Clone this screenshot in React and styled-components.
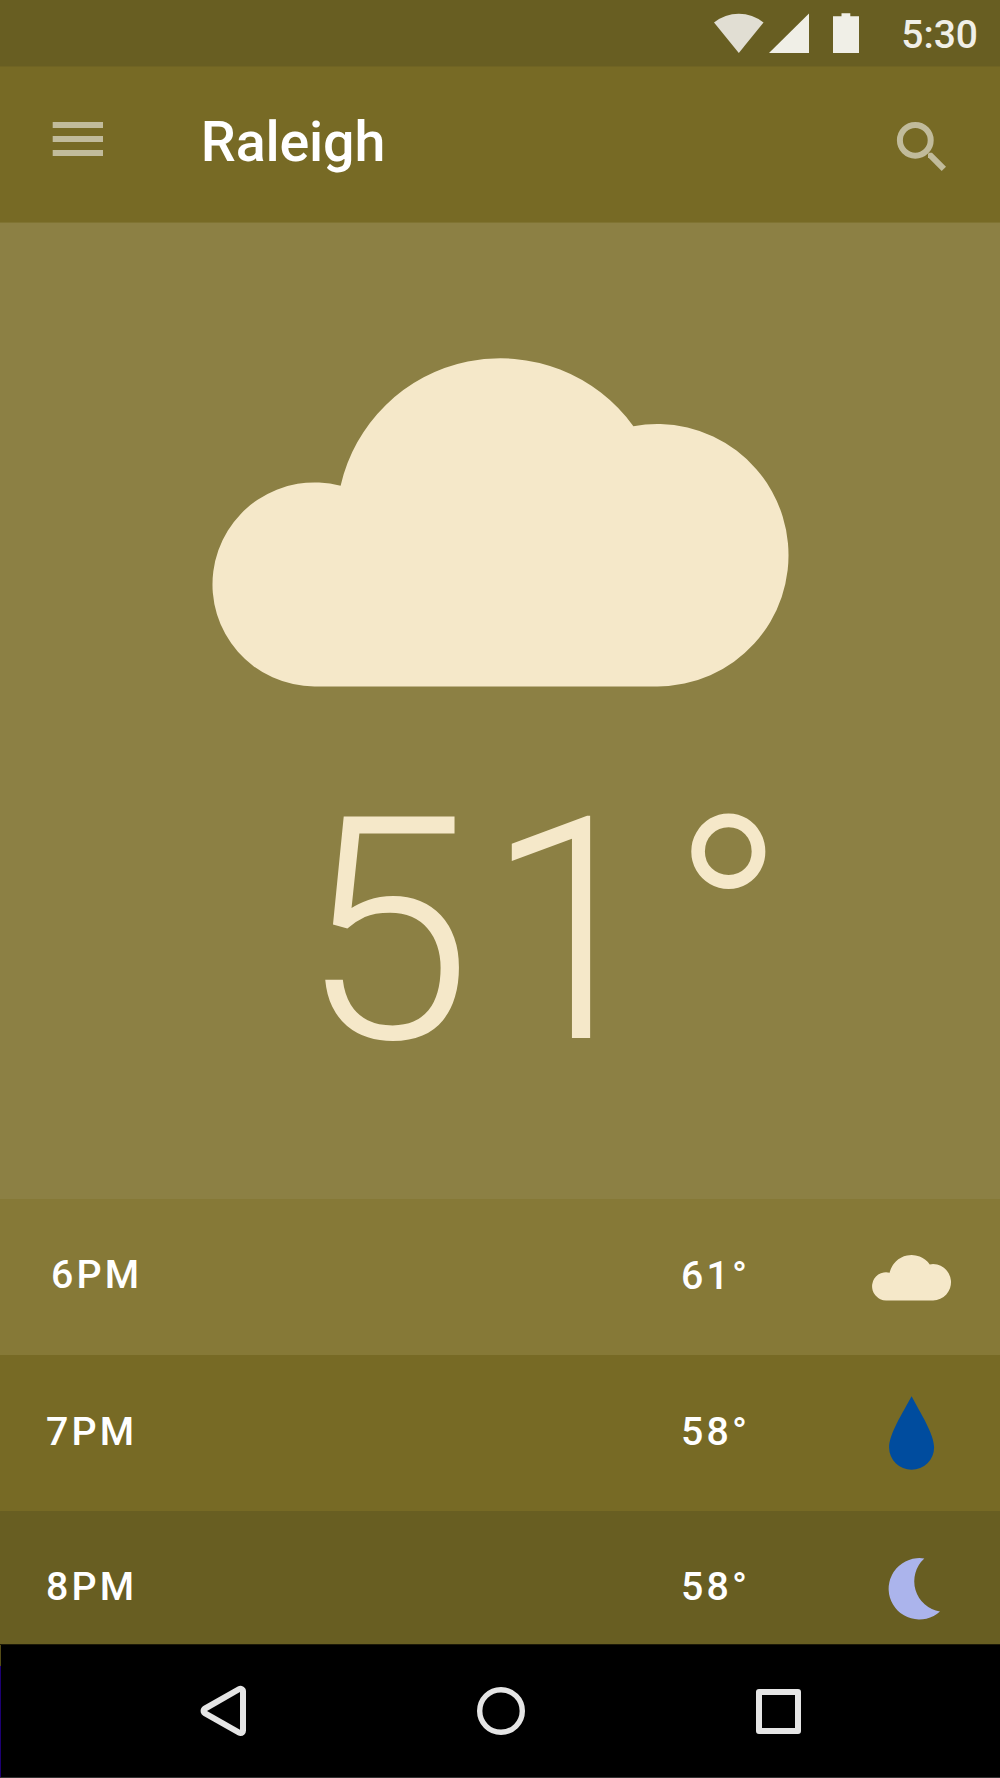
import React from "react";
import styled, { createGlobalStyle } from "styled-components";

const cream = "#f5e8c9";

const GlobalStyle = createGlobalStyle`
  *, *::before, *::after { box-sizing: border-box; }
  body { margin: 0; background: #685e22; }
  svg { display: block; flex: none; overflow: visible; }
`;

const Screen = styled.div`
  width: 1000px;
  height: 1778px;
  display: flex;
  flex-direction: column;
  overflow: hidden;
  font-family: Roboto, "Noto Sans", sans-serif;
  color: #fff;
`;

const StatusBar = styled.header`
  flex: 0 0 66px;
  display: flex;
  align-items: flex-start;
  justify-content: flex-end;
  padding-right: 22px;
  background: #685e22;
`;

const StatusIcons = styled.div`
  padding-top: 13px;
`;

const Clock = styled.time`
  margin-left: 41px;
  padding-top: 16px;
  font-size: 39px;
  line-height: 1;
  font-weight: 500;
  color: #f0efe7;
`;

const AppBar = styled.div`
  flex: 0 0 156px;
  display: flex;
  align-items: flex-start;
  padding: 0 53px;
  background: #776a25;
  border-top: 1px solid #706423;
`;

const IconButton = styled.button`
  appearance: none;
  border: 0;
  padding: 0;
  margin: ${(p) => p.$top}px 0 0;
  background: none;
  color: #c1bb9b;
`;

const Title = styled.h1`
  flex: 1;
  margin: 0 0 0 97.8px;
  padding-top: 48px;
  font-size: 55.6px;
  line-height: 1;
  font-weight: 500;
  letter-spacing: -0.15px;
`;

const Hero = styled.main`
  flex: 0 0 977px;
  display: flex;
  flex-direction: column;
  align-items: center;
  padding-top: 135px;
  background: #8c8044;
  border-top: 1px solid #807432;
`;

const Temperature = styled.div`
  display: flex;
  align-self: flex-start;
  margin: 89.5px 0 0 299.7px;
  font-size: 311.5px;
  line-height: 1;
  font-weight: 300;
  letter-spacing: 12.1px;
  color: ${cream};
`;

const Hours = styled.ul`
  flex: 0 0 445px;
  margin: 0;
  padding: 0;
  list-style: none;
  overflow: hidden;
`;

const HourRow = styled.li`
  height: 156px;
  display: grid;
  grid-template-columns: 681px 190.6px 80px;
  align-items: center;
  padding-top: ${(p) => p.$drop || 0}px;
  background: ${(p) => p.$tone};
`;

const Label = styled.span`
  padding: 0 0 ${(p) => p.$lift ?? 2}px ${(p) => p.$indent || 0}px;
  font-size: 39.3px;
  line-height: 1;
  font-weight: 500;
  letter-spacing: 3.2px;
`;

const IconCell = styled.span`
  display: flex;
  justify-content: center;
  padding-left: ${(p) => p.$shift || 0}px;
`;

const NavBar = styled.nav`
  flex: 0 0 134px;
  display: flex;
  background: #000;
  border-top: 1px solid #1c1907;
  border-bottom: 1px solid #333;
`;

const NavEdge = styled.span`
  flex: 0 0 1px;
  background: linear-gradient(#544c16 0 21px, #1d0073 21px);
`;

const NavButtons = styled.div`
  flex: 1;
  display: flex;
  align-items: center;
  gap: 231px;
  padding-left: 199px;
`;

const NavButton = styled.button`
  appearance: none;
  border: 0;
  padding: 0;
  background: none;
`;

const Cloud = ({ width, height }) => (
  <svg width={width} height={height} viewBox="212.2 358 576.4 328.4" preserveAspectRatio="none" fill={cream}>
    <path d="M314.8 686.4A102 102 0 1 1 340.8 485.8A164 164 0 0 1 633.6 426.2A131.2 131.2 0 1 1 657.6 686.4Z" />
  </svg>
);

const Drop = () => (
  <svg width="45" height="74" viewBox="889 1396.5 45 74" fill="#004c9e">
    <path d="M911.6 1396.7C920 1413 934.1 1434 934.1 1448A22.5 22.3 0 0 1 889.1 1448C889.1 1434 903 1413 911.6 1396.7Z" />
  </svg>
);

const Moon = () => (
  <svg width="51" height="62" viewBox="889 1558 51 62" fill="#abb4ec">
    <path d="M924.3 1558.5A30.7 30.7 0 1 0 940 1611.5A30.7 30.7 0 0 1 924.3 1558.5Z" />
  </svg>
);

const StatusGlyphs = () => (
  <svg width="146" height="40" viewBox="714 13 146 40">
    <path d="M738.8 53L714 22.5Q725 13.7 738.8 13.7T763.5 22.5Z" fill="#e1ded3" />
    <path d="M769 53H809V13.5Z" fill="#f0efe7" />
    <path d="M833 16.3H841.5V13.3H850.3V16.3H859V53H833Z" fill="#f0efe7" />
  </svg>
);

const MenuIcon = () => (
  <svg width="50" height="34" viewBox="0 0 50 34" fill="currentColor">
    <rect x="-0.3" y="0" width="50.3" height="6" />
    <rect x="-0.3" y="14" width="50.3" height="6" />
    <rect x="-0.3" y="28" width="50.3" height="6" />
  </svg>
);

const SearchIcon = () => (
  <svg width="50" height="50" viewBox="897 122 50 50" fill="currentColor">
    <circle cx="915.3" cy="140.3" r="15.4" fill="none" stroke="currentColor" strokeWidth="6" />
    <path d="M929 152.7H932L946 166.7L941.7 171L928 157.3V154Z" />
  </svg>
);

const BackIcon = () => (
  <svg width="46" height="52" viewBox="200 1685 46 52">
    <path d="M206 1710.9L240.5 1691.3V1730.5Z" fill="#e5e5e5" stroke="#e5e5e5" strokeWidth="11" strokeLinejoin="round" />
    <path d="M207 1710.9L240 1692V1729.8Z" fill="#000" />
  </svg>
);

const HomeIcon = () => (
  <svg width="48" height="48" viewBox="0 0 48 48">
    <circle cx="24" cy="24" r="21.3" fill="none" stroke="#e5e5e5" strokeWidth="5.4" />
  </svg>
);

const RecentsIcon = () => (
  <svg width="45" height="45" viewBox="0 0 45 45">
    <path fillRule="evenodd" fill="#e5e5e5" d="M3 0H42A3 3 0 0 1 45 3V42A3 3 0 0 1 42 45H3A3 3 0 0 1 0 42V3A3 3 0 0 1 3 0ZM6 6V39H39V6Z" />
  </svg>
);

const hours = [
  { time: "6PM", temp: "61°", tone: "#867937", drop: 1, indent: 51, lift: 4, tempLift: 2, icon: <Cloud width={79} height={45.4} /> },
  { time: "7PM", temp: "58°", tone: "#776a25", indent: 46, lift: 0, tempLift: 0, icon: <Drop /> },
  { time: "8PM", temp: "58°", tone: "#685e22", indent: 46, lift: 2, tempLift: 2, shift: 6, icon: <Moon /> },
];

export default function App() {
  return (
    <Screen>
      <GlobalStyle />
      <StatusBar>
        <StatusIcons><StatusGlyphs /></StatusIcons>
        <Clock>5:30</Clock>
      </StatusBar>
      <AppBar>
        <IconButton $top={55} aria-label="Menu"><MenuIcon /></IconButton>
        <Title>Raleigh</Title>
        <IconButton $top={55} aria-label="Search"><SearchIcon /></IconButton>
      </AppBar>
      <Hero>
        <Cloud width={576.4} height={328.4} />
        <Temperature>51°</Temperature>
      </Hero>
      <Hours>
        {hours.map((h) => (
          <HourRow key={h.time} $tone={h.tone} $drop={h.drop}>
            <Label $indent={h.indent} $lift={h.lift}>{h.time}</Label>
            <Label $lift={h.tempLift}>{h.temp}</Label>
            <IconCell $shift={h.shift}>{h.icon}</IconCell>
          </HourRow>
        ))}
      </Hours>
      <NavBar>
        <NavEdge />
        <NavButtons>
          <NavButton aria-label="Back"><BackIcon /></NavButton>
          <NavButton aria-label="Home"><HomeIcon /></NavButton>
          <NavButton aria-label="Recents"><RecentsIcon /></NavButton>
        </NavButtons>
      </NavBar>
    </Screen>
  );
}
